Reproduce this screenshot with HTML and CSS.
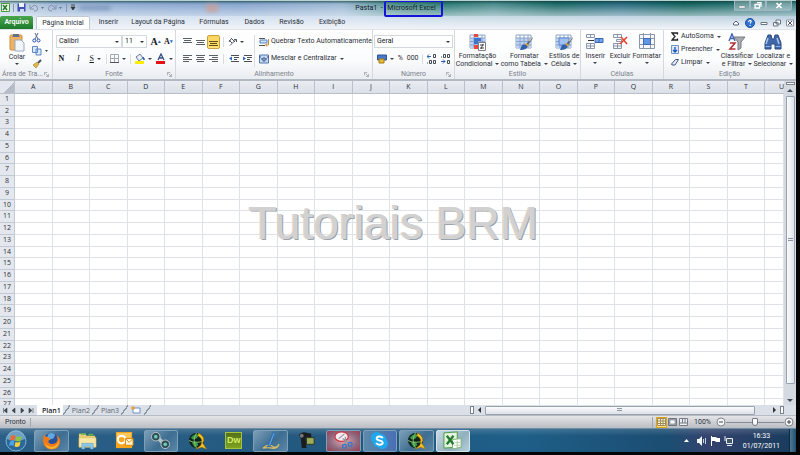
FILE: index.html
```html
<!DOCTYPE html>
<html lang="pt-BR">
<head>
<meta charset="utf-8">
<title>Pasta1 - Microsoft Excel</title>
<link rel="stylesheet" href="styles.css">
</head>
<body>
<svg class="defs" aria-hidden="true">
  <defs>
    <symbol id="launcher" viewBox="0 0 6 6"><path d="M.5 4V.5H4M2 2l3 3M5.500 2.500v3h-3" fill="none" stroke="#9aa0a8"/></symbol>
    <symbol id="grid" viewBox="0 0 18 18"><path d="M1 2h15v13H1z" fill="#fff" stroke="#8fa4c4"/><path d="M1 5h15v10H1z" fill="#bcd2f2"/><path d="M1 5h15M1 8.500h15M1 12h15M5 2v13M9 2v13M13 2v13" stroke="#8ba3ca" fill="none"/></symbol>
    <symbol id="brush" viewBox="0 0 18 18"><path d="M17 5l-6 8" stroke="#5c6570" stroke-width="2"/><path d="M17 4l-3 4" stroke="#b4bac0" stroke-width="2"/><path d="M12 11l-5 1-2 5c4 0 7-1 8-4z" fill="#2f5fae"/><path d="M11 10l3 2-1 2-3-3z" fill="#d9a43c"/></symbol>
    <symbol id="norton" viewBox="0 0 20 20"><circle cx="9" cy="10" r="8" fill="#10231a"/><path d="M3 7q4-5 9-3l-3 4-4 1zM4 12l5-1 2 4-4 2z" fill="#3f9b4c"/><path d="M1 10q8 4 16 0M9 2q-5 8 0 16" fill="none" stroke="#83c36b"/><path d="M11 2q8 4 4.500 11l4 6-5-2-6 2 5-4q3-7-3-10z" fill="#f7c325" stroke="#9d7008" stroke-width=".6"/></symbol>
  </defs>
</svg>

<header class="titlebar">
  <div class="quick">
    <svg width="9" height="9" viewBox="0 0 9 9"><path d="M.5.500h8v8h-8z" fill="#e9f6e4" stroke="#4e9a48"/><path d="M2 2l4 5M6 2L2 7" stroke="#217a2b" stroke-width="1.500"/></svg>
    <i class="rule"></i>
    <button aria-label="Salvar"><svg width="9" height="9" viewBox="0 0 9 9"><path d="M.5.500h8v8h-8z" fill="#3f50b5"/><path d="M2 0h5v4H2z" fill="#eef2fb"/><path d="M3 6h4v3H3z" fill="#cfd6ee"/></svg></button>
    <button aria-label="Desfazer"><svg width="16" height="9" viewBox="0 0 16 9"><path d="M2 5q4-5 6-1t-3 4M1 2v4h4" fill="none" stroke="#8592ac"/><path d="M12 4h3l-1.500 2z" fill="#66738a"/></svg></button>
    <button aria-label="Refazer"><svg width="15" height="9" viewBox="0 0 15 9"><path d="M7 5Q3 0 1 4t3 4M8 2v4H4" fill="none" stroke="#8592ac"/><path d="M11 4h3l-1.500 2z" fill="#66738a"/></svg></button>
    <i class="rule"></i>
    <button aria-label="Personalizar"><svg width="6" height="7" viewBox="0 0 6 7"><path d="M1 1h4M1 3h4L3 6z" stroke="#333" fill="#333" stroke-width=".8"/></svg></button>
    <i class="ghost"></i>
    <i class="ghost warm"></i>
  </div>
  <h1>Pasta1 &nbsp;- <span class="mark">Microsoft Excel</span></h1>
  <div class="winctl">
    <button aria-label="Minimizar"><svg width="8" height="7" viewBox="0 0 8 7"><path d="M1 4h6v2H1z" fill="#fff" stroke="#667" stroke-width=".4"/></svg></button>
    <button aria-label="Restaurar"><svg width="8" height="7" viewBox="0 0 8 7"><path d="M3 .7h4v4M1 2.500h4.500v3.500H1z" fill="none" stroke="#fff" stroke-width="1.300"/></svg></button>
    <button aria-label="Fechar" class="close"><svg width="8" height="7" viewBox="0 0 8 7"><path d="M1.500 1l5 5M6.500 1l-5 5" stroke="#fff" stroke-width="1.700"/></svg></button>
  </div>
</header>

<nav class="tabs">
  <button class="file">Arquivo</button>
  <button class="active">Página Inicial</button>
  <button>Inserir</button>
  <button class="wide">Layout da Página</button>
  <button>Fórmulas</button>
  <button>Dados</button>
  <button>Revisão</button>
  <button>Exibição</button>
  <div class="helpers">
    <svg width="8" height="8" viewBox="0 0 8 8"><path d="M1 5l3-3 3 3-1 1H2z" fill="#fff" stroke="#56606e"/></svg>
    <svg width="10" height="10" viewBox="0 0 10 10"><circle cx="5" cy="5" r="4.500" fill="#2f71cf" stroke="#1d4f9c"/><path d="M3.500 4Q4 2 5.500 2.500T5 5.500M5 7v1" stroke="#fff" stroke-width="1.200" fill="none"/></svg>
    <svg width="8" height="8" viewBox="0 0 8 8"><path d="M1 3.500h6v2H1z" fill="#fff" stroke="#6a7482"/></svg>
    <svg width="8" height="8" viewBox="0 0 8 8"><path d="M3 1h4.500v4H3zM.5 3.500H5v3.500H.5z" fill="#fff" stroke="#6a7482"/></svg>
    <svg width="8" height="8" viewBox="0 0 8 8"><path d="M.5 1h7v6h-7z" fill="#fff" stroke="#8a94a2"/><path d="M2 2l4 4M6 2L2 6" stroke="#4a5462"/></svg>
  </div>
</nav>

<section class="ribbon">
  <div class="group">
    <div class="tools clip">
      <button class="big">
        <svg width="18" height="19" viewBox="0 0 18 19"><rect x="2" y="2" width="12" height="15" rx="1" fill="#edb365" stroke="#d09142"/><path d="M5 3V1h6v2l1 1H4z" fill="#65718a"/><path d="M7 7h6l3 3v8H7z" fill="#f3f7fd" stroke="#9aa9c2"/></svg>
        <span>Colar</span><span class="down"></span>
      </button>
      <div class="stack">
        <button aria-label="Recortar"><svg width="9" height="10" viewBox="0 0 9 10"><path d="M3 0l3 6M6 0L3 6" stroke="#50688d"/><circle cx="2.300" cy="7.500" r="1.500" fill="none" stroke="#2450a8"/><circle cx="6.500" cy="7.500" r="1.500" fill="none" stroke="#2450a8"/></svg></button>
        <button aria-label="Copiar"><svg width="17" height="10" viewBox="0 0 17 10"><path d="M.5.500h5v6h-5zM4 3h5v6H4z" fill="#dceafb" stroke="#5f86c4"/><path d="M13 4h3l-1.500 2z" fill="#444"/></svg></button>
        <button aria-label="Pincel"><svg width="10" height="10" viewBox="0 0 10 10"><path d="M9 1L6 4" stroke="#474f6b" stroke-width="2"/><path d="M5 3l2 2-3 4-3-3z" fill="#e6b93d" stroke="#8e7a46" stroke-width=".6"/></svg></button>
      </div>
    </div>
    <footer class="first">Área de Tra...<svg class="launch"><use href="#launcher"/></svg></footer>
  </div>

  <div class="group">
    <div class="tools rows">
      <div class="row">
        <label class="combo font"><select aria-label="Fonte"><option>Calibri</option></select></label><label class="combo size"><select aria-label="Tamanho"><option>11</option></select></label>
        <button class="glyph grow">A<sup>▴</sup></button>
        <button class="glyph shrink">A<sup>▾</sup></button>
      </div>
      <div class="row fmt">
        <button class="glyph"><b>N</b></button>
        <button class="glyph"><em>I</em></button>
        <button class="glyph drop"><u>S</u></button>
        <i class="sep"></i>
        <button class="drop" aria-label="Bordas"><svg width="9" height="9" viewBox="0 0 9 9"><path d="M.5.500h8v8h-8zM4.500 0v8M0 4.500h9" fill="none" stroke="#a2a8b2"/><path d="M0 8.500h9" stroke="#555"/></svg></button>
        <i class="sep"></i>
        <button class="drop" aria-label="Cor de Preenchimento"><svg width="10" height="11" viewBox="0 0 10 11"><path d="M1 4l4-3 3 4-4 3z" fill="#e9eff8" stroke="#6a7a9a"/><path d="M8 4q2 2 1 3z" fill="#2c62b8" stroke="#2c62b8"/><path d="M0 8h9v3H0z" fill="#ffee00"/></svg></button>
        <button class="drop" aria-label="Cor da Fonte"><svg width="10" height="11" viewBox="0 0 10 11"><path d="M2 7l3-6 3 6M3 5h4" fill="none" stroke="#35517f" stroke-width="1.300"/><path d="M0 8h9v3H0z" fill="#e81010"/></svg></button>
      </div>
    </div>
    <footer>Fonte<svg class="launch"><use href="#launcher"/></svg></footer>
  </div>

  <div class="group">
    <div class="tools align">
      <div class="rows">
        <div class="row aligns">
          <button aria-label="Em cima"><svg width="9" height="9" viewBox="0 0 9 9"><path d="M0 1.500h9M1 3.500h7M0 5.500h9" stroke="#5b5f66"/></svg></button>
          <button aria-label="No meio"><svg width="9" height="9" viewBox="0 0 9 9"><path d="M0 3.500h9M1 5.500h7M0 7.500h9" stroke="#5b5f66"/></svg></button>
          <button aria-label="Embaixo" class="on"><svg width="9" height="9" viewBox="0 0 9 9"><path d="M0 4.500h9M1 6.500h7M0 8.500h9" stroke="#5f4b14"/></svg></button>
          <i class="sep"></i>
          <button class="drop" aria-label="Orientação"><svg width="9" height="9" viewBox="0 0 9 9"><path d="M2 8.500l6-6M6 2.500h2.500V5M1 3l3 3M3 1l4 4M1 5l2-3" stroke="#555b64" fill="none"/></svg></button>
        </div>
        <div class="row aligns">
          <button aria-label="Esquerda"><svg width="9" height="9" viewBox="0 0 9 9"><path d="M0 1.500h9M0 3.500h6M0 5.500h9M0 7.500h6" stroke="#5b5f66"/></svg></button>
          <button aria-label="Centro"><svg width="9" height="9" viewBox="0 0 9 9"><path d="M0 1.500h9M1 3.500h7M0 5.500h9M1 7.500h7" stroke="#5b5f66"/></svg></button>
          <button aria-label="Direita"><svg width="9" height="9" viewBox="0 0 9 9"><path d="M0 1.500h9M3 3.500h6M0 5.500h9M3 7.500h6" stroke="#5b5f66"/></svg></button>
          <i class="sep"></i>
          <button aria-label="Diminuir Recuo"><svg width="10" height="9" viewBox="0 0 10 9"><path d="M2 1.500h8M5 3.500h5M5 5.500h3M2 7.500h8" stroke="#4b5058"/><path d="M0 4.500l3-2v4z" fill="#2d68c4"/></svg></button>
          <button aria-label="Aumentar Recuo"><svg width="10" height="9" viewBox="0 0 10 9"><path d="M2 1.500h8M5 3.500h5M5 5.500h3M2 7.500h8" stroke="#4b5058"/><path d="M4 4.500l-3-2v4z" fill="#2d68c4"/></svg></button>
        </div>
      </div>
      <i class="sep tall"></i>
      <div class="rows">
        <button class="line"><svg width="10" height="10" viewBox="0 0 10 10"><path d="M0 1.500h6M0 8.500h6" stroke="#555"/><path d="M1 3h7v3H1z" fill="#cfe0f6" stroke="#5b87c8"/><path d="M9.500 2v6H7M8 6.500L6.500 8 8 9.500" stroke="#c98a35" fill="none"/></svg>Quebrar Texto Automaticamente</button>
        <button class="line"><svg width="10" height="10" viewBox="0 0 10 10"><path d="M.5 1h9v8h-9z" fill="#c7daf3" stroke="#5577ab"/><path d="M0 3h2M8 3h2M2 5h2M6 5h2M4 4v3h2V4z" stroke="#2f4f8c" fill="#fff"/></svg>Mesclar e Centralizar<span class="down"></span></button>
      </div>
    </div>
    <footer>Alinhamento<svg class="launch"><use href="#launcher"/></svg></footer>
  </div>

  <div class="group">
    <div class="tools rows">
      <div class="row"><label class="combo number"><select aria-label="Formato de Número"><option>Geral</option></select></label></div>
      <div class="row nums">
        <button class="drop" aria-label="Moeda"><svg width="10" height="10" viewBox="0 0 10 10"><path d="M.5 1h9v5h-9z" fill="#4978c8" stroke="#2b5499"/><path d="M2 5h5v4H2z" fill="#e9bd38" stroke="#a17b17"/></svg></button>
        <button>%</button>
        <button>000</button>
        <i class="sep"></i>
        <button aria-label="Aumentar Casas"><svg width="10" height="10" viewBox="0 0 10 10"><path d="M0 2.500h4M2 .5l-2 2 2 2" stroke="#2c63bd" fill="none"/><path d="M6.500 .5h2v3h-2zM2.500 6.500h2v3h-2zM6.500 6.500h2v3h-2zM.5 8.500v1" fill="none" stroke="#454b55"/></svg></button>
        <button aria-label="Diminuir Casas"><svg width="10" height="10" viewBox="0 0 10 10"><path d="M0 7.500h4M2 5.500l2 2-2 2" stroke="#2c63bd" fill="none"/><path d="M2.500 .5h2v3h-2zM6.500 .5h2v3h-2zM6.500 6.500h2v3h-2zM.5 2.500v1" fill="none" stroke="#454b55"/></svg></button>
      </div>
    </div>
    <footer>Número<svg class="launch"><use href="#launcher"/></svg></footer>
  </div>

  <div class="group">
    <div class="tools style">
      <button class="big"><svg width="18" height="18" viewBox="0 0 18 18"><use href="#grid"/><path d="M5 1h4v3H5zM5 12h4v4H5z" fill="#e44a3c"/><path d="M5 5h7v3H5zM5 8h4v3H5z" fill="#3d76cc"/><path d="M9.500 9.500h7v8h-7z" fill="#fff" stroke="#7b8088"/><path d="M11 12h4M11 15h4M12 16l2-5" stroke="#444"/></svg><span>Formatação</span><span>Condicional<span class="down"></span></span></button>
      <button class="big"><svg width="18" height="18" viewBox="0 0 18 18"><use href="#grid"/><use href="#brush"/></svg><span>Formatar</span><span>como Tabela<span class="down"></span></span></button>
      <button class="big"><svg width="18" height="18" viewBox="0 0 18 18"><use href="#grid"/><path d="M4 5h10v7H4z" fill="#9fc0f2" stroke="#5c86cc"/><use href="#brush"/></svg><span>Estilos de</span><span>Célula<span class="down"></span></span></button>
    </div>
    <footer>Estilo</footer>
  </div>

  <div class="group">
    <div class="tools cells">
      <button class="big"><svg width="18" height="18" viewBox="0 0 18 18"><path d="M.5 1.500h8v3h-8zM.5 10.500h8v5h-8zM4.500 1v3M4.500 10v6M.5 13h8" fill="#f6f8fc" stroke="#8b97ab"/><path d="M9 5.500h8v4H9zM13 5v5" fill="#79a6e8" stroke="#3766b0"/><path d="M8 7.500H2" stroke="#333"/></svg><span>Inserir</span><span class="down"></span></button>
      <button class="big"><svg width="18" height="18" viewBox="0 0 18 18"><path d="M2.500 1.500h8v3h-8zM2.500 10.500h8v5h-8zM6.500 1v3M6.500 10v6M2.500 13h8M5.500 6.500h5v2h-5z" fill="#f6f8fc" stroke="#8b97ab"/><path d="M10 4l6 7M16 4l-7 7" stroke="#e8412e" stroke-width="1.600"/></svg><span>Excluir</span><span class="down"></span></button>
      <button class="big"><svg width="18" height="18" viewBox="0 0 18 18"><path d="M1.500 1.500h15v14h-15zM5.500 0v16M12.500 0v16M1 5.500h16M1 11.500h16" fill="#f6f8fc" stroke="#8b97ab"/><path d="M5.500 5.500h7v6h-7z" fill="#6295e6" stroke="#3c6cb8"/></svg><span>Formatar</span><span class="down"></span></button>
    </div>
    <footer>Células</footer>
  </div>

  <div class="group">
    <div class="tools edit">
      <div class="stack">
        <button class="line"><svg width="8" height="9" viewBox="0 0 8 9"><path d="M6.500 2.500V1H1l3 3.500L1 8h5.500V6.500" fill="none" stroke="#222" stroke-width="1.300"/></svg>AutoSoma<span class="down"></span></button>
        <button class="line"><svg width="8" height="9" viewBox="0 0 8 9"><path d="M.5.500h7v8h-7z" fill="#dbe8fa" stroke="#7394c8"/><path d="M4 2v5M2 5l2 2 2-2" stroke="#1c55b8" stroke-width="1.300" fill="none"/></svg>Preencher<span class="down"></span></button>
        <button class="line"><svg width="8" height="9" viewBox="0 0 8 9"><path d="M.5 6l4-4.500h3L4 7H1z" fill="#e8eef8" stroke="#3f5583"/></svg>Limpar<span class="down"></span></button>
      </div>
      <button class="big"><svg width="18" height="18" viewBox="0 0 18 18"><path d="M1 8l3-7 3 7M2 5.500h4" stroke="#3d62b4" stroke-width="1.400" fill="none"/><path d="M2 10h5l-5 6h5.500" stroke="#b3323a" stroke-width="1.600" fill="none"/><path d="M6 4h11l-4 5v6l-3 2V9z" fill="#a8abb0" stroke="#777b82"/></svg><span>Classificar</span><span>e Filtrar<span class="down"></span></span></button>
      <button class="big"><svg width="18" height="18" viewBox="0 0 18 18"><path d="M4 2h3l1 4h2l1-4h3l3 8v6h-6v-5H7v5H1v-6z" fill="#3f66a8" stroke="#2c4a80"/><path d="M4 5l-2 6M13 5l2 6" stroke="#a9c4ee" stroke-width="1.500"/><path d="M1.500 13.500h5M11.500 13.500h5" stroke="#8fb0e4"/></svg><span>Localizar e</span><span>Selecionar<span class="down"></span></span></button>
    </div>
    <footer>Edição</footer>
  </div>
</section>

<main class="sheet">
  <div class="cells-view">
    <table id="grid-table" aria-label="Planilha"></table>
    <p class="watermark">Tutoriais BRM</p>
  </div>
  <div class="vscroll">
    <i class="split"></i><b class="arrow up"></b><div class="thumb"><i class="grip"></i></div><b class="arrow dn"></b>
  </div>
</main>

<div class="sheetbar">
  <div class="navs">
    <svg width="37" height="7" viewBox="0 0 37 7"><path d="M3.500 1v5M7 1v5L4 3.500zM15 1v5l-3-2.500zM21 1v5l3-2.500zM29 1v5l3-2.500zM33 1v5" fill="#3d434c" stroke="#3d434c" stroke-width=".6"/></svg>
  </div>
  <button class="sel">Plan1</button><i class="slash"></i>
  <button>Plan2</button><i class="slash"></i>
  <button>Plan3</button><i class="slash"></i>
  <button aria-label="Inserir Planilha"><svg width="12" height="8" viewBox="0 0 12 8"><path d="M3 2h7v5H3z" fill="#fff" stroke="#6d8fc6"/><path d="M1 2h4M3 0v4" stroke="#e5a13a" stroke-width="1.300"/></svg></button><i class="slash"></i>
  <div class="hscroll">
    <i class="split"></i><b class="arrow lt"></b><div class="thumb"><i class="grip"></i></div><b class="arrow rt"></b><i class="split"></i>
  </div>
</div>

<div class="status">
  <span class="ready">Pronto</span>
  <div class="views">
    <button class="on" aria-label="Normal"><svg width="9" height="8" viewBox="0 0 9 8"><path d="M.5.500h8v7h-8zM3.500 0v8M6 0v8M0 3h9M0 5.500h9" fill="#fff7d8" stroke="#9a8a5a"/></svg></button>
    <button aria-label="Layout da Página"><svg width="9" height="8" viewBox="0 0 9 8"><path d="M.5.500h8v7h-8z" fill="#9a9fa7" stroke="#6f757e"/><path d="M2.500 2.500h4v3h-4z" fill="#fff"/></svg></button>
    <button aria-label="Quebra de Página"><svg width="9" height="8" viewBox="0 0 9 8"><path d="M.5.500h8v7h-8zM3.500 0v5M6 0v5M0 5h9" fill="#eceef1" stroke="#777d86"/></svg></button>
  </div>
  <span class="pct">100%</span>
  <button class="round" aria-label="Menos Zoom"><svg width="10" height="10" viewBox="0 0 10 10"><circle cx="5" cy="5" r="4" fill="#f6f7f9" stroke="#7f858e"/><path d="M3 5h4" stroke="#444"/></svg></button>
  <input type="range" aria-label="Zoom" min="0" max="100" value="50">
  <button class="round" aria-label="Mais Zoom"><svg width="10" height="10" viewBox="0 0 10 10"><circle cx="5" cy="5" r="4" fill="#f6f7f9" stroke="#7f858e"/><path d="M3 5h4M5 3v4" stroke="#444"/></svg></button>
</div>

<footer class="taskbar">
  <button class="start" aria-label="Iniciar"><svg width="22" height="22" viewBox="0 0 22 22"><circle cx="11" cy="11" r="10" fill="#2b6797" stroke="#7fb0cf"/><path d="M2 9a9 9 0 0 1 18 0q-9 4-18 0z" fill="#8fbbd6" opacity=".7"/><path d="M6 6q2-1.500 4.500 0l-1 4.500Q7 9 5 10.500z" fill="#ec6a2c"/><path d="M11.500 6.500q2.500 1 5-.5l-1 5q-2.500 1-5-.5z" fill="#8dc63f"/><path d="M5 11.500q2-1.500 4.500 0l-1 4.500Q6 14.500 4 16z" fill="#4aa4ea"/><path d="M10.500 12q2.500 1 5-.5l-1 4.500q-2.500 1.500-5 .5z" fill="#fcd13a"/></svg></button>
  <div class="tasks">
    <button class="run" aria-label="Firefox"><svg viewBox="0 0 20 20"><circle cx="10" cy="10" r="8" fill="#24509e"/><path d="M7 3q4-2 7 1l-2 4-4 1-3-2z" fill="#62a8e0"/><path d="M2 4q1 2 3 2 2 0 4 3-3 1-2 3 3 3 7 1 4-3 1-9 5 4 4 8-1 7-9 7.500Q2 19 1 11q0-4 1-7z" fill="#ee7a1c"/><path d="M3 13q4 5 10 3 4-2 5-6 0 8-8 9-5 0-7-6z" fill="#fbb62e"/></svg></button>
    <button aria-label="Explorer"><svg viewBox="0 0 20 20"><path d="M1 3h7l1 2h9v12H1z" fill="#e9cd76"/><path d="M3 3h5M11 4h5" stroke="#5fb14f" stroke-width="2"/><path d="M1 7h18v10H1z" fill="#f8e7a4" stroke="#d7b75c" stroke-width=".6"/><path d="M4 19v-6h12v6h-3v-3H7v3z" fill="#8fc9ea" stroke="#5a9dcb" stroke-width=".6"/></svg></button>
    <button aria-label="Outlook"><svg viewBox="0 0 20 20"><path d="M1 1h17v17H1z" fill="#f6a41c"/><path d="M2 2h15v5H2z" fill="#fbc65a"/><circle cx="7" cy="9" r="4" fill="none" stroke="#fff" stroke-width="2.200"/><path d="M11 8h8v7h-8z" fill="#fff3d0" stroke="#d88810"/><path d="M11 8l4 4 4-4" fill="none" stroke="#d88810"/></svg></button>
    <button class="run" aria-label="Conexões"><svg viewBox="0 0 20 20"><path d="M6 6l9 9" stroke="#b5c5c8" stroke-width="4"/><circle cx="5" cy="6" r="4.500" fill="#2e4b50" stroke="#b9c9cc"/><circle cx="15" cy="14" r="4.500" fill="#2e4b50" stroke="#b9c9cc"/><circle cx="5" cy="6" r="2" fill="#6cc3bb"/><circle cx="15" cy="14" r="2" fill="#6cc3bb"/></svg></button>
    <button aria-label="Norton"><svg viewBox="0 0 20 20"><use href="#norton"/></svg></button>
    <button aria-label="Dreamweaver"><span class="dw">Dw</span></button>
    <button class="run" aria-label="Editor"><svg viewBox="0 0 20 20"><path d="M2 18q6-5 10-2t7-2q-2 5-7 4t-10 0z" fill="none" stroke="#d9bd62" stroke-width="1.300"/><path d="M13 1L8 14l-1 3 3-2 5-13z" fill="#5aa0e0" stroke="#1f5a9c" stroke-width=".7"/></svg></button>
    <button aria-label="Câmera"><svg viewBox="0 0 20 20"><path d="M2 4q3-4 9-2l4 1v4H9l1 11H5L4 8z" fill="#191d20"/><circle cx="5" cy="5" r="2" fill="#777"/><path d="M10 7h8v7h-8z" fill="#9cae5a" stroke="#30361f"/></svg></button>
    <button class="run red" aria-label="Captura"><svg viewBox="0 0 20 20"><ellipse cx="8" cy="6" rx="7" ry="5" fill="#f6ecec" stroke="#cf3540" stroke-width="1.300"/><path d="M5 8l6-5M9 8l7 5M12 6v8" stroke="#8c98a8" stroke-width="1.300"/><circle cx="11" cy="16" r="2" fill="none" stroke="#2f78c8" stroke-width="1.400"/><circle cx="17" cy="14" r="2" fill="none" stroke="#2f78c8" stroke-width="1.400"/></svg></button>
    <button class="run blue" aria-label="Skype"><svg viewBox="0 0 20 20"><circle cx="7" cy="7" r="6" fill="#20a7ec"/><circle cx="13" cy="13" r="6" fill="#20a7ec"/><circle cx="10" cy="10" r="7.500" fill="#20a7ec"/><path d="M13.500 7.500Q12 5.500 9.500 5.800T7 8q0 1.500 3 2t3.500 2.300q-.5 2-3.500 2.200-2.500 0-3.500-2" fill="none" stroke="#fff" stroke-width="2"/></svg></button>
    <button class="run" aria-label="Norton"><svg viewBox="0 0 20 20"><use href="#norton"/></svg></button>
    <button class="run lit" aria-label="Excel"><svg viewBox="0 0 20 20"><path d="M1 2l14-1v16l-14 1z" fill="#e3f2dc" stroke="#4c9a46"/><path d="M10 9l9-1v9l-9 2z" fill="#fff" stroke="#7bb573"/><path d="M12 12h6M12 15h6M15 10v8" stroke="#8fbf88" stroke-width=".7"/><path d="M4 5l7 9M11 5l-7 9" stroke="#227a2e" stroke-width="2.400"/></svg></button>
  </div>
  <div class="tray">
    <svg width="50" height="12" viewBox="0 0 50 12"><path d="M0 7l2.500-3L5 7z" fill="#fff"/><path d="M13 4h2l3-3v10l-3-3h-2z" fill="#f2f5f8"/><path d="M19.500 4v4M21.500 3v6" stroke="#c8d4de"/><path d="M27.500 1v10" stroke="#fff"/><path d="M28 2h4l1 1h3v4h-4l-1-1h-3z" fill="#fff"/><path d="M42.500 3.500h6v5h-6zM43 10.500h5M41 1v5" fill="#456" stroke="#e8eef3"/></svg>
    <div class="clock"><span>16:33</span><span>01/07/2011</span></div>
    <i class="peek"></i>
  </div>
</footer>
<script src="grid.js"></script>
</body>
</html>
```
FILE: grid.js
```js
const table = document.getElementById('grid-table');
const letters = 'ABCDEFGHIJKLMNOPQRSTU'.split('');
const head = table.createTHead().insertRow();
const corner = document.createElement('td');
corner.className = 'corner';
head.append(corner);
for (const letter of letters) {
  const th = document.createElement('th');
  th.scope = 'col';
  th.textContent = letter;
  head.append(th);
}
const body = table.createTBody();
for (let n = 1; n <= 27; n++) {
  const row = body.insertRow();
  const th = document.createElement('th');
  th.scope = 'row';
  th.textContent = n;
  row.append(th);
  letters.forEach(() => row.insertCell());
}
```
FILE: styles.css
```css
* { box-sizing: border-box; }
body {
  margin: 0;
  height: 100vh;
  display: flex;
  flex-direction: column;
  padding: 0 4px 3px 0;
  background: #050505;
  overflow: hidden;
  font: 7px/9px Roboto, "Liberation Sans", sans-serif;
  color: #2b3038;
}
button {
  display: flex;
  align-items: center;
  justify-content: center;
  padding: 0;
  border: 0;
  background: none;
  font: inherit;
  color: inherit;
  white-space: nowrap;
}
svg { flex: none; display: block; }
.defs { position: absolute; width: 0; height: 0; }

/* title bar */
.titlebar {
  flex: 0 0 16px;
  min-height: 0;
  position: relative;
  z-index: 1;
  display: grid;
  grid-template-columns: 1fr auto 1fr;
  grid-template-rows: minmax(0, 1fr);
  align-items: center;
  border-top: 1px solid #b9d2cf;
  background:
    linear-gradient(rgba(0, 50, 50, .6), transparent 3px, rgba(235, 242, 250, .6)),
    linear-gradient(90deg, #c9dbe6, #9fb7d6 7%, #8eabd2 18%, #86a5cd 30%, #9db8d3 43%, #4d8f8b 50%, #2f7c76 56%, #4e8d8e 62%, #1e6a67 70%, #2d6d83 78%, #16645f 86%, #3d7f85);
}
.quick { display: flex; align-items: center; gap: 3px; padding: 0 0 2px 1px; }
.rule { width: 1px; height: 8px; background: #8999b4; }
.ghost { width: 32px; height: 4px; border-radius: 2px; background: #5d7aa5; filter: blur(2px); opacity: .6; }
.warm { width: 12px; height: 8px; margin-left: 92px; background: #d59a8c; opacity: .7; }
h1 { margin: 0; padding-left: 2px; font: inherit; color: #14212b; white-space: nowrap; }
.mark { display: inline-block; padding: 2px 5px 2px 1px; border: 2px solid #1414d8; border-top-width: 1px; border-radius: 2px; }
.winctl { justify-self: end; align-self: start; display: flex; margin-right: 4px; }
.winctl button { width: 16px; height: 10px; border: 1px solid #9db6c2; border-top: 0; background: rgba(255, 255, 255, .3); }
.winctl .close { width: 26px; border-radius: 0 0 3px 0; }

/* ribbon tabs */
.tabs {
  flex: 0 0 13px;
  display: flex;
  background: linear-gradient(rgba(255, 255, 255, .2), #f1f4f8), linear-gradient(90deg, #d4e0ef, #c5d6ec 45%, #b8d0dc 60%, #a9c4d8);
}
.tabs button { width: 50px; margin-right: -1px; }
.tabs .file { width: 33px; margin-right: 3px; background: linear-gradient(#4aa64c, #1d7a2a); color: #fff; border-radius: 2px 2px 0 0; font-weight: 600; }
.tabs .active { width: 54px; margin-right: 0; background: #fff; border: 1px solid #c3cad4; border-bottom: 0; border-radius: 2px 2px 0 0; }
.tabs .wide { width: 64px; }
.tabs button:nth-child(3) { width: 37px; }
.tabs button:nth-child(6) { width: 33px; }
.tabs button:nth-child(7) { width: 43px; }
.tabs button:nth-child(8) { width: 40px; }
.tabs .helpers { margin-left: auto; display: flex; align-items: center; gap: 5px; padding-right: 2px; }

/* ribbon */
.ribbon {
  flex: 0 0 52px;
  display: grid;
  grid-template-columns: 53fr 123fr 197fr 82fr 126fr 83fr 132fr;
  background: linear-gradient(#fff, #fbfcfd 60%, #e9ecf0);
  border-top: 1px solid #dde2e8;
  border-bottom: 2px solid #b3b9c2;
}
.group { display: flex; flex-direction: column; min-width: 0; border-right: 1px solid #d5d9df; }
.group footer { display: flex; align-items: center; justify-content: center; height: 9px; color: #7b828d; position: relative; white-space: nowrap; padding-bottom: 1px; }
.group .first { justify-content: flex-start; padding-left: 2px; }
.launch { position: absolute; right: 3px; top: 2px; width: 5px; height: 5px; }
.tools { flex: 1; min-height: 0; display: flex; }
.rows { display: flex; flex-direction: column; gap: 2px; padding-top: 4px; }
.row { display: flex; align-items: center; height: 15px; }
.sep { flex: none; width: 1px; height: 10px; background: #d9dce1; }
.down, .drop::after { content: ""; display: inline-block; flex: none; width: 0; height: 0; margin-left: 3px; border: 2px solid transparent; border-top-color: #3b4048; border-bottom: 0; vertical-align: middle; }
.big { flex-direction: column; justify-content: flex-start; padding-top: 3px; }
.big svg { margin-bottom: 1px; }
.big span { line-height: 8px; }
.big > .down { margin: 2px 0 0; }
.clip { justify-content: space-between; padding: 0 2px 0 8px; }
.clip .stack { display: flex; flex-direction: column; gap: 3px; padding-top: 3px; align-items: flex-start; width: 18px; }
.combo { position: relative; display: block; }
.combo select { appearance: none; display: block; width: 100%; height: 13px; padding: 0 2px; border: 1px solid #d3d7de; border-radius: 0; background: #fff; font: inherit; color: #14181e; }
.combo::after { content: ""; position: absolute; right: 3px; top: 6px; border: 2px solid transparent; border-top-color: #333; border-bottom: 0; }
.font { width: 66px; margin-left: 3px; }
.size { width: 25px; }
.number { width: 79px; margin-left: 1px; }
.glyph { width: 13px; font: 8px/9px "Liberation Serif", serif; color: #15191f; }
.grow { font-size: 10px; font-weight: bold; margin-left: 2px; }
.shrink { font-weight: bold; }
.glyph sup { font-size: 5px; color: #2f66be; }
.fmt { justify-content: space-between; padding: 0 2px; }
.align { padding-left: 5px; }
.aligns button { width: 13px; height: 14px; }
.aligns .on { background: linear-gradient(#fbd35a, #ffe27b); border: 1px solid #c8a241; border-radius: 2px; }
.aligns .sep { margin: 0 3px; }
.aligns .drop { width: 18px; }
.align .tall { height: 32px; margin: 5px 4px 0 1px; }
.align .line { height: 15px; }
.line { justify-content: flex-start; gap: 2px; }
.line .down { margin-left: 1px; }
.nums { justify-content: space-between; padding: 0 3px 0 4px; }
.style { justify-content: space-around; }
.style .big { flex: 1 0 auto; }
.cells { padding: 0 2px; }
.cells .big { flex: 1; }
.edit { justify-content: space-between; padding: 0 4px 0 7px; }
.edit .stack { display: flex; flex-direction: column; gap: 4px; padding-top: 2px; }

/* worksheet */
.sheet { flex: 1; min-height: 0; display: flex; background: #fff; }
.cells-view { flex: 1; min-width: 0; position: relative; overflow: hidden; }
table, thead, tbody { display: block; }
tr { display: grid; grid-template-columns: 15px repeat(20, minmax(0, 2fr)) minmax(0, 1fr); min-height: 0; }
thead tr { height: 13px; }
tbody { display: grid; grid-template-rows: repeat(27, minmax(0, 1fr)); height: 317px; }
th, td { min-width: 0; min-height: 0; padding: 0; border: solid #dfe2e6; border-width: 0 1px 1px 0; }
th { font: 7px/10px "Open Sans", "Noto Sans", sans-serif; text-align: center; color: #2a2f37; background: #e4e8ee; border-color: #c3c9d2; }
thead th, .corner { background: linear-gradient(#e9ecf1, #dbe0e8); border-color: #b9c0ca; line-height: 12px; }
.corner { background: linear-gradient(135deg, #e4e8ee 60%, #b5bcc7 60%); }
thead th:last-child { text-align: right; border-right: 0; }
.watermark {
  position: absolute;
  inset: 0;
  display: flex;
  align-items: center;
  justify-content: center;
  margin: 0;
  padding: 0 0 40px 3px;
  font: 46px/50px "Liberation Sans", sans-serif;
  color: #d1d1d1;
  text-shadow: -1px 0 #e3d6c9, 1px 1px #9aa2ab;
}
.vscroll { flex: 0 0 12px; display: flex; flex-direction: column; align-items: center; padding: 1px 0 0; background: #d5d9e0; }
.vscroll .split { width: 9px; height: 3px; border: 1px solid #7a828e; background: #fff; }
.arrow { flex: none; width: 0; height: 0; border: 3px solid transparent; }
.up { border-bottom: 3px solid #444b55; border-top: 0; margin: 4px 0 4px; }
.dn { border-top: 3px solid #444b55; border-bottom: 0; margin: 4px 0 3px; }
.thumb { display: flex; align-items: center; justify-content: center; border: 1px solid #98a1ae; border-radius: 1px; }
.vscroll .thumb { width: 9px; flex: 1; margin-bottom: 11px; background: linear-gradient(90deg, #fafbfc, #dfe3e9); }
.grip { width: 5px; height: 4px; background: repeating-linear-gradient(#8d95a1 0 1px, transparent 1px 2px); }

/* sheet tabs */
.sheetbar { flex: 0 0 11px; display: flex; align-items: center; background: #dbe0e8; border-bottom: 1px solid #b6bcc6; color: #5d6673; font-family: "Open Sans", "Noto Sans", sans-serif; }
.navs { width: 37px; }
.sheetbar button { height: 10px; padding: 0 2px; }
.sheetbar .sel { background: #fff; color: #14181e; font-weight: 600; padding: 0 2px 0 5px; }
.slash { width: 7px; height: 10px; background: linear-gradient(125deg, transparent 45%, #8d95a1 45% 57%, transparent 57%); }
.hscroll { margin-left: auto; width: 41%; display: flex; align-items: center; gap: 4px; }
.hscroll .split { width: 4px; height: 8px; border: 1px solid #7a828e; background: #fff; }
.hscroll .thumb { flex: 1; height: 9px; margin-right: 14px; background: linear-gradient(#fafbfc, #dde1e8); }
.hscroll .split:last-child { margin-right: 12px; }
.lt { border-right: 3px solid #333; border-left: 0; }
.rt { border-left: 3px solid #333; border-right: 0; }

/* status bar */
.status { flex: 0 0 12px; display: flex; align-items: center; background: linear-gradient(#e4e5e8, #b9bcc2); }
.ready { width: 31px; padding-left: 5px; border-right: 1px solid #a2a7af; }
.views { margin-left: auto; display: flex; padding-left: 3px; border-left: 1px solid #a2a7af; }
.views button { width: 11px; height: 11px; }
.views .on { background: #ffe07a; border: 1px solid #d8a520; }
.pct { width: 27px; text-align: center; }
.round { width: 10px; }
input[type=range] { appearance: none; width: 58px; height: 10px; margin: 0; background: linear-gradient(#868c96, #868c96) center / 100% 1px no-repeat; }
input[type=range]::-webkit-slider-thumb { appearance: none; width: 6px; height: 8px; border: 1px solid #70767f; border-radius: 1px 1px 3px 3px; background: #fafbfc; }
.status .round:last-child { margin-right: 2px; }

/* taskbar */
.taskbar { flex: 0 0 24px; display: flex; align-items: center; border-top: 1px solid #6f8ea6; background: linear-gradient(rgba(255, 255, 255, .15), transparent 30%), linear-gradient(90deg, #2b5f87, #22587e 45%, #1e5f88 65%, #1c4d72 84%, #34436e 89%, #173c5c); }
.start { width: 34px; padding-right: 2px; }
.tasks { width: 436px; height: 22px; display: grid; grid-template-columns: repeat(12, 1fr); gap: 2px; }
.tasks svg { width: 19px; height: 19px; }
.run { border: 1px solid #7e9fb8; border-radius: 2px; background: linear-gradient(135deg, #7d9fb8, #3d6d91 55%, #5b86a6); }
.red { background: radial-gradient(#e8a4ac, #8c6a80 60%, #a03a50); }
.blue { background: linear-gradient(90deg, #5b89a9, #4a6fb5); }
.lit { background: linear-gradient(135deg, #c8d9e2, #8fb0be 60%, #b8d0d8); border-color: #d3e2ea; }
.dw { width: 17px; height: 17px; border: 1px solid #a3c43c; background: linear-gradient(#52701a, #7fa321); color: #d3ee62; font: bold 9px/15px "Liberation Sans", sans-serif; }
.tray { margin-left: auto; display: flex; align-items: center; gap: 9px; height: 23px; color: #fff; }
.clock { display: flex; flex-direction: column; align-items: center; }
.clock span { line-height: 10px; }
.peek { width: 7px; height: 23px; border-left: 1px solid #0e2a42; background: linear-gradient(90deg, #4f7894, #23506f); }
```
